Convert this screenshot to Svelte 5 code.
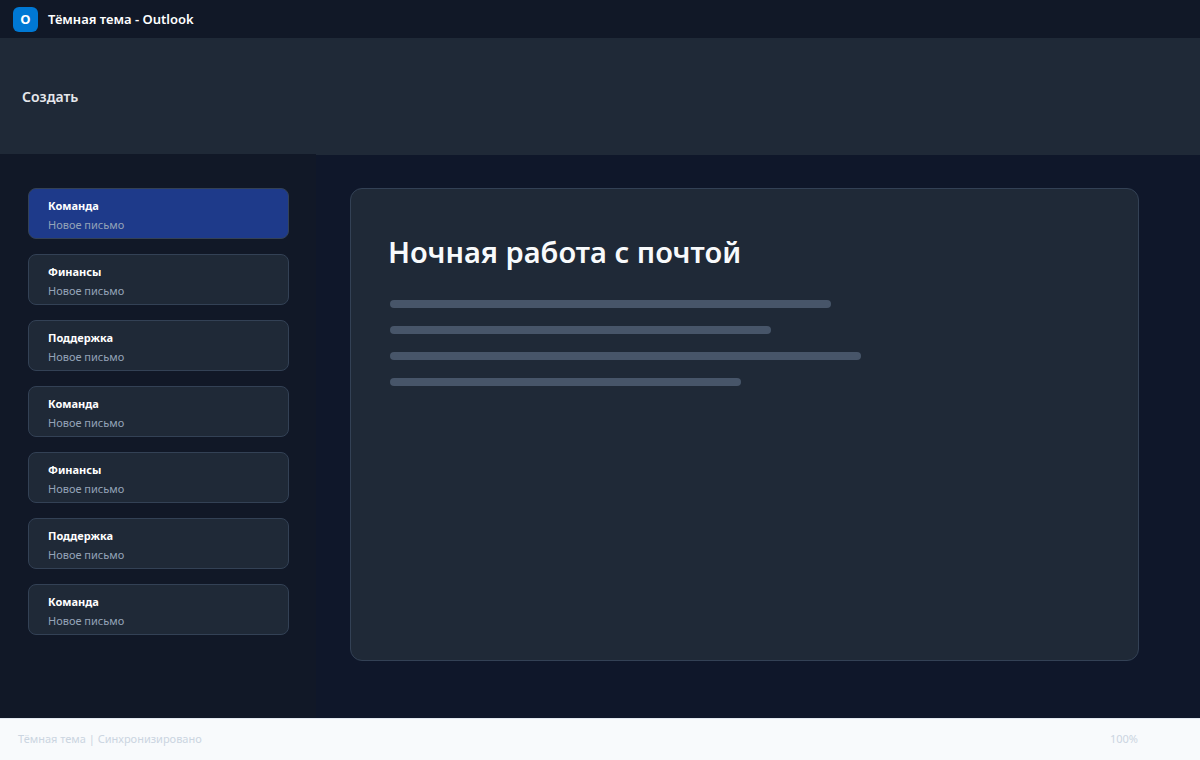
<script>
  const messages = ['Команда', 'Финансы', 'Поддержка', 'Команда', 'Финансы', 'Поддержка', 'Команда'];
  const lines = [441, 381, 471, 351];

  let selected = $state(0);
</script>

<div class="window">
  <header class="titlebar">
    <span class="logo">O</span>
    <span class="title">Тёмная тема - Outlook</span>
  </header>

  <nav class="ribbon">
    <button class="create" type="button">Создать</button>
  </nav>

  <div class="workspace">
    <aside class="sidebar">
      {#each messages as sender, i}
        <button
          class="message"
          class:active={selected === i}
          type="button"
          onclick={() => (selected = i)}
        >
          <span class="sender">{sender}</span>
          <span class="subject">Новое письмо</span>
        </button>
      {/each}
    </aside>

    <main class="content">
      <article class="reader">
        <h1>Ночная работа с почтой</h1>
        <div class="lines">
          {#each lines as width}
            <div class="line" style="width: {width}px"></div>
          {/each}
        </div>
      </article>
    </main>
  </div>

  <footer class="statusbar">
    <span>Тёмная тема | Синхронизировано</span>
    <span>100%</span>
  </footer>
</div>

<style>
  :global(body) {
    margin: 0;
    background: #0f172a;
  }

  .window {
    display: flex;
    flex-direction: column;
    min-height: 100vh;
    font-family: 'Segoe UI', 'Noto Sans', 'Open Sans', sans-serif;
    color: #f8fafc;
  }

  button {
    margin: 0;
    font-family: inherit;
    text-align: left;
    cursor: pointer;
  }

  .titlebar {
    display: flex;
    align-items: center;
    gap: 10px;
    height: 38px;
    padding: 0 13px;
    background: #111827;
  }

  .logo {
    width: 25px;
    height: 25px;
    border-radius: 6px;
    background: #0078d4;
    color: #fff;
    font-size: 13px;
    font-weight: 700;
    line-height: 24px;
    text-align: center;
  }

  .title {
    color: #fff;
    font-size: 13px;
    font-weight: 600;
    line-height: 20px;
  }

  .ribbon {
    display: flex;
    align-items: center;
    box-sizing: border-box;
    height: 116px;
    padding: 2px 22px 0;
    background: #1f2937;
  }

  .create {
    padding: 0;
    border: 0;
    background: none;
    color: #e5e7eb;
    font-size: 14px;
    font-weight: 600;
    line-height: 20px;
  }

  .workspace {
    display: flex;
    flex: 1;
  }

  .sidebar {
    display: flex;
    flex: none;
    flex-direction: column;
    gap: 15px;
    box-sizing: border-box;
    width: 316px;
    padding: 34px 27px 34px 28px;
    background: #111827;
  }

  .message {
    display: flex;
    flex-direction: column;
    gap: 2px;
    box-sizing: border-box;
    height: 51px;
    padding: 8px 19px;
    border: 1px solid #334155;
    border-radius: 8px;
    background: #1f2937;
  }

  .message.active {
    background: #1e3a8a;
  }

  .sender {
    color: #fff;
    font-size: 11px;
    font-weight: 700;
    line-height: 18px;
  }

  .subject {
    color: #94a3b8;
    font-size: 11px;
    line-height: 16px;
  }

  .content {
    display: flex;
    flex: 1;
    padding: 33px 61px 57px 34px;
    border-top: 1px solid #1f2937;
    background: #0f172a;
  }

  .reader {
    flex: 1;
    padding: 42px 37px;
    border: 1px solid #334155;
    border-radius: 12px;
    background: #1f2937;
  }

  h1 {
    margin: 0;
    font-size: 29px;
    font-weight: 600;
    line-height: 42px;
  }

  .lines {
    display: flex;
    flex-direction: column;
    gap: 18px;
    padding: 27px 2px;
  }

  .line {
    max-width: 100%;
    height: 8px;
    border-radius: 4px;
    background: #475569;
  }

  .statusbar {
    display: flex;
    align-items: center;
    justify-content: space-between;
    box-sizing: border-box;
    height: 42px;
    padding: 0 62px 2px 18px;
    border-top: 1px solid #e2e8f0;
    background: #f8fafc;
    color: #cbd5e1;
    font-size: 11px;
    line-height: 18px;
  }
</style>
